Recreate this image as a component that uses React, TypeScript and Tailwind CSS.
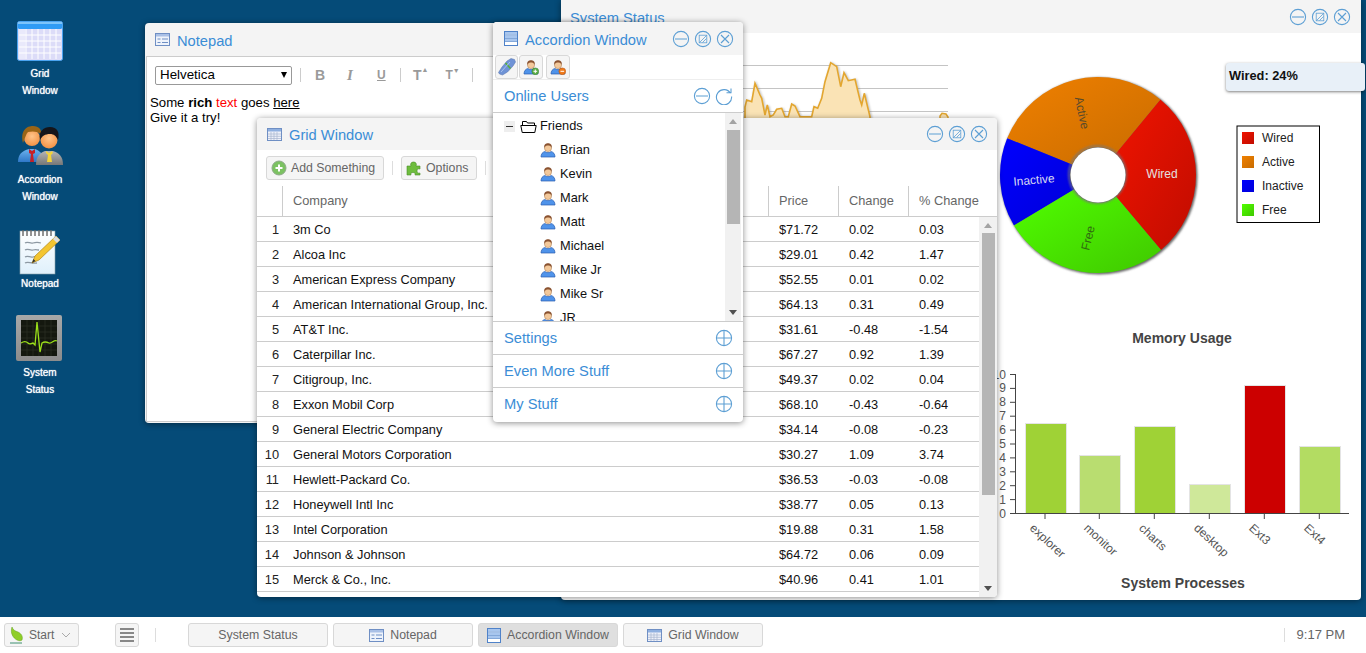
import React from "react";

const blue = "#3b8dd6";
const Ctl = ({ kind }: { kind: "min" | "max" | "close" | "plus" | "refresh" }) => (
  <svg width="18" height="18" viewBox="0 0 18 18" fill="none" stroke="#5d9fd4" strokeWidth="1.1" className="shrink-0">
    {kind === "refresh" ? (
      <path d="M15.5 6.2A7.6 7.6 0 1 0 16.6 9.5M11.5 5.8h4.5V1.6" />
    ) : (
      <circle cx="9" cy="9" r="7.6" />
    )}
    {kind === "min" && <path d="M3 9h12" />}
    {kind === "plus" && <path d="M2 9h14M9 2v14" />}
    {kind === "close" && <path d="M5 5l8 8M13 5l-8 8" />}
    {kind === "max" && (
      <g strokeWidth=".8">
        <rect x="5.2" y="5.2" width="7.6" height="7.6" />
        <path d="M5.500 12.500l7-7M8.500 12.500l4-4" />
      </g>
    )}
  </svg>
);

const FormIcon = () => (
  <svg width="15" height="13" viewBox="0 0 15 13" className="shrink-0">
    <rect x=".5" y=".5" width="14" height="12" fill="#eef3fb" stroke="#6f8fc4" />
    <rect x="1" y="1" width="13" height="2.500" fill="#a9c0e6" />
    <path d="M2.500 6h3M2.500 9.500h3M7 6h6M7 9.500h6" stroke="#6f8fc4" />
  </svg>
);
const GridIcon = () => (
  <svg width="15" height="13" viewBox="0 0 15 13" className="shrink-0">
    <rect x=".5" y=".5" width="14" height="12" fill="#eef1fa" stroke="#6f8fc4" />
    <rect x="1" y="1" width="13" height="2.500" fill="#8fb0e0" />
    <path d="M1 6h13M1 8.300h13M1 10.500h13M4 4v8M7 4v8M10 4v8" stroke="#a7b4cf" strokeWidth=".7" />
  </svg>
);
const AccIcon = () => (
  <svg width="14" height="15" viewBox="0 0 14 15" className="shrink-0">
    <rect x=".5" y=".5" width="13" height="14" fill="#fff" stroke="#4f82c9" />
    <rect x="1" y="1" width="12" height="2.500" fill="#a8c6ee" />
    <rect x="1" y="4.500" width="12" height="2.500" fill="#a8c6ee" />
    <rect x="1" y="8" width="12" height="2" fill="#a8c6ee" />
    <path d="M1 4h12M1 7.500h12M1 10.500h12" stroke="#4f82c9" strokeWidth=".7" />
  </svg>
);

const UserSmall = ({ badge }: { badge?: "add" | "del" }) => (
  <svg width="16" height="16" viewBox="0 0 16 16" className="shrink-0">
    <path d="M1 15c0-3 1.500-5 4-5.500 1 1.500 5 1.500 6 0 2.500.5 4 2.500 4 5.500z" fill="#4f93ea" stroke="#2a5db0" strokeWidth=".7" />
    <circle cx="8" cy="6" r="3.600" fill="#f3c89a" stroke="#8a5a30" strokeWidth=".4" />
    <path d="M4.300 6C3.800 2 6 1.200 8 1.200S12.200 2 11.700 6c-.6-2-2-2.500-3.700-2.500S4.900 4 4.300 6z" fill="#8a5230" />
    {badge === "add" && (
      <g>
        <circle cx="12.300" cy="12.300" r="3.400" fill="#5fb04a" stroke="#2f7a2a" strokeWidth=".5" />
        <path d="M10.500 12.300h3.600M12.300 10.500v3.600" stroke="#fff" />
      </g>
    )}
    {badge === "del" && (
      <g>
        <circle cx="12.300" cy="12.300" r="3.400" fill="#ef7a1a" stroke="#b54f0a" strokeWidth=".5" />
        <path d="M10.500 12.300h3.600" stroke="#fff" />
      </g>
    )}
  </svg>
);

const DeskGrid = () => (
  <svg width="46" height="40" viewBox="0 0 46 40">
    <rect x=".5" y=".5" width="45" height="39" rx="2" fill="#dcdcf8" stroke="#4aa3f0" />
    <rect x="1" y="1" width="44" height="7" rx="1.500" fill="#2f9bf5" />
    <rect x="1" y="1" width="44" height="2" fill="#7cc4fb" />
    <rect x="2" y="8" width="6" height="30" fill="#e9e9fb" />
    <path d="M2 14h42M2 20h42M2 26h42M2 32h42M9 8v30M15 8v30M21 8v30M27 8v30M33 8v30M39 8v30" stroke="#fff" />
  </svg>
);
const DeskUsers = () => (
  <svg width="47" height="40" viewBox="0 0 47 40">
    <defs>
      <radialGradient id="fc" cx=".5" cy=".4" r=".7"><stop offset="0" stopColor="#ffc48a" /><stop offset="1" stopColor="#f08a3a" /></radialGradient>
      <linearGradient id="bs" x1="0" y1="0" x2="0" y2="1"><stop offset="0" stopColor="#6cb2ee" /><stop offset="1" stopColor="#2f78c8" /></linearGradient>
      <linearGradient id="gs" x1="0" y1="0" x2="0" y2="1"><stop offset="0" stopColor="#b4b4b4" /><stop offset="1" stopColor="#777" /></linearGradient>
    </defs>
    <path d="M1 36c0-8 4-11 11-13h6c5 2 9 5 9 13z" fill="url(#bs)" />
    <path d="M12 23l3 2 3-2 0 4-2 1 1 8h-4l1-8-2-1z" fill="#c62026" />
    <circle cx="15" cy="12" r="8" fill="url(#fc)" />
    <path d="M6 17C3 4 10 0 16 0s9 4 8 8c-4-3-9-3-13-2-2 2-3 6-5 11z" fill="#9a6416" />
    <path d="M19 39c0-9 4-12 9-14h8c6 2 10 5 10 14z" fill="url(#gs)" />
    <path d="M29 25l3 2 3-2 1 2-2 2 1 7h-5l1-7-2-2z" fill="#f3d33a" />
    <circle cx="32" cy="14" r="8.500" fill="url(#fc)" />
    <path d="M23 14c-2-9 4-13 10-13 7 0 10 5 8 13-2-4-4-6-8-6-5 0-8 2-10 6z" fill="#15151a" />
  </svg>
);
const DeskNotepad = () => (
  <svg width="42" height="46" viewBox="0 0 42 46">
    <defs><linearGradient id="pg" x1="0" y1="0" x2="0" y2="1"><stop offset="0" stopColor="#fff" /><stop offset="1" stopColor="#dff0fb" /></linearGradient></defs>
    <rect x="1" y="2" width="35" height="43" fill="url(#pg)" stroke="#8aa0a8" strokeWidth=".6" />
    <path d="M4 1v6M8 1v6M12 1v6M16 1v6M20 1v6M24 1v6M28 1v6M32 1v6" stroke="#666" strokeWidth="1.400" />
    <path d="M6 14c3-2 5 1 8 0s5-1 8 0M6 21c3-2 5 1 8 0s4 0 6 0M6 28c3-2 5 1 8 0 2-1 2 0 4 0M6 34c3-2 6 1 12 0" fill="none" stroke="#8d99a3" strokeWidth="1.300" />
    <path d="M37 7l4 4-21 20-7 3 3-7z" fill="#f3c531" stroke="#b08518" strokeWidth=".7" />
    <path d="M37 7l4 4-3 3-4-4z" fill="#ddd" />
    <path d="M13 34l1.500-4 2 2z" fill="#333" />
  </svg>
);
const DeskStatus = () => (
  <svg width="46" height="46" viewBox="0 0 46 46" className="-ml-[2px]">
    <defs><linearGradient id="sg" x1="0" y1="0" x2="0" y2="1"><stop offset="0" stopColor="#a8a8a8" /><stop offset="1" stopColor="#8c8c8c" /></linearGradient></defs>
    <rect x="0" y="0" width="46" height="46" rx="2" fill="url(#sg)" />
    <rect x="5" y="5" width="36" height="36" fill="#14180f" />
    <path d="M5 11h36M5 17h36M5 23h36M5 29h36M5 35h36M11 5v36M17 5v36M23 5v36M29 5v36M35 5v36" stroke="#2c3226" strokeWidth=".7" />
    <path d="M5 28c3-2 5-2 7 0 2 2 4 0 5 0l2 2 2-23 3 30 2-9c3-2 5-1 7 0 3 1 5-4 8-2" fill="none" stroke="#9be01a" strokeWidth="1.300" />
  </svg>
);

const DeskItem = ({ icon, lines, cls }: { icon: React.ReactNode; lines: string[]; cls: string }) => (
  <div className="flex flex-col items-center w-[80px]">
    <div className="flex justify-center items-end">{icon}</div>
    <div className={`text-white text-[10px] leading-[17px] text-center [text-shadow:0_0_1px_#fff] ${cls}`}>
      {lines.map((l) => (
        <div key={l}>{l}</div>
      ))}
    </div>
  </div>
);

const Scrollbar = ({ thumbTop, thumbH, cls }: { thumbTop: string; thumbH: string; cls: string }) => (
  <div className={`relative flex flex-col items-center bg-[#f1f1f1] ${cls}`}>
    <div className="mt-[6px] w-0 h-0 border-x-[4px] border-x-transparent border-b-[5px] border-b-[#a3a3a3]" />
    <div className={`bg-[#b5b5b5] w-[13px] ${thumbTop} ${thumbH}`} />
    <div className="mt-auto mb-[6px] w-0 h-0 border-x-[4px] border-x-transparent border-t-[5px] border-t-[#505050]" />
  </div>
);

const rows: [string, string, string, string][] = [
  ["3m Co", "$71.72", "0.02", "0.03"],
  ["Alcoa Inc", "$29.01", "0.42", "1.47"],
  ["American Express Company", "$52.55", "0.01", "0.02"],
  ["American International Group, Inc.", "$64.13", "0.31", "0.49"],
  ["AT&T Inc.", "$31.61", "-0.48", "-1.54"],
  ["Caterpillar Inc.", "$67.27", "0.92", "1.39"],
  ["Citigroup, Inc.", "$49.37", "0.02", "0.04"],
  ["Exxon Mobil Corp", "$68.10", "-0.43", "-0.64"],
  ["General Electric Company", "$34.14", "-0.08", "-0.23"],
  ["General Motors Corporation", "$30.27", "1.09", "3.74"],
  ["Hewlett-Packard Co.", "$36.53", "-0.03", "-0.08"],
  ["Honeywell Intl Inc", "$38.77", "0.05", "0.13"],
  ["Intel Corporation", "$19.88", "0.31", "1.58"],
  ["Johnson & Johnson", "$64.72", "0.06", "0.09"],
  ["Merck & Co., Inc.", "$40.96", "0.41", "1.01"],
];

const area =
  "745,130 745,107 746.700,100 751.700,101.700 755,83.300 760,95 761.700,98.300 765,115 767.300,105 770,116.700 773.300,115 776.700,109.300 781.700,108.300 785,116.700 788.300,116.700 791.700,104 795,106 800,116.700 811.700,116.700 814,106.700 817.700,108.300 821.700,98.300 825,81.700 830.700,62.700 836.700,66.700 840.700,86.700 844,72.700 848.300,80.700 855,79.300 860,100 861.700,105 864.300,93.300 870,116.700 870,130";

const pol = (r: number, a: number) => {
  const t = (a * Math.PI) / 180;
  return `${(1098 + r * Math.cos(t)).toFixed(2)} ${(175 + r * Math.sin(t)).toFixed(2)}`;
};
const slice = (a0: number, a1: number) => {
  const large = a1 - a0 > 180 ? 1 : 0;
  return `M${pol(28, a0)} L${pol(98, a0)} A98 98 0 ${large} 1 ${pol(98, a1)} L${pol(28, a1)} A28 28 0 ${large} 0 ${pol(28, a0)}Z`;
};

const bars = [
  { x: 1026, t: 424, c: "#9fd236", l: "explorer", tx: 1045 },
  { x: 1080, t: 456, c: "#b9dd70", l: "monitor", tx: 1099.3 },
  { x: 1135, t: 427, c: "#9fd236", l: "charts", tx: 1154.3 },
  { x: 1190, t: 485, c: "#cfe89a", l: "desktop", tx: 1209.3 },
  { x: 1245, t: 386, c: "#cc0000", l: "Ext3", tx: 1264.3 },
  { x: 1300, t: 447, c: "#b3dc62", l: "Ext4", tx: 1319.3 },
];

const Charts = () => (
  <svg viewBox="561 33 800 567" className="w-full h-full block" fontFamily="'Liberation Sans', Arial, sans-serif">
    <defs>
      <linearGradient id="g1" x1="0" y1="0" x2="1" y2="1"><stop offset="0" stopColor="#f01400" /><stop offset="1" stopColor="#c00c00" /></linearGradient>
      <linearGradient id="g2" x1="0" y1="0" x2="1" y2="1"><stop offset="0" stopColor="#f08000" /><stop offset="1" stopColor="#c86c00" /></linearGradient>
      <linearGradient id="g3" x1="0" y1="0" x2="1" y2="1"><stop offset="0" stopColor="#0000ff" /><stop offset="1" stopColor="#0000d8" /></linearGradient>
      <linearGradient id="g4" x1="0" y1="0" x2="1" y2="1"><stop offset="0" stopColor="#50ff00" /><stop offset="1" stopColor="#40c800" /></linearGradient>
      <filter id="bl" x="-20%" y="-20%" width="140%" height="140%"><feGaussianBlur stdDeviation="1" /></filter>
    </defs>

    {[65.5, 88.5, 111.5].map((y) => (
      <line key={y} x1="600" x2="948" y1={y} y2={y} stroke="#c4c4c4" />
    ))}
    <polygon points="940,125 940,116 942,113.300 946,114 948,117 948,125" fill="#fae3b5" stroke="#e3a62f" strokeWidth="1.500" />
    <polygon points={area} fill="none" stroke="#666" strokeWidth="2" opacity=".45" filter="url(#bl)" transform="translate(1 1)" />
    <polygon points={area} fill="#fae3b5" stroke="#e3a62f" strokeWidth="1.600" />

    <circle cx="1099" cy="176" r="98.500" fill="#666" filter="url(#bl)" />
    <path d={slice(-50.500, 50)} fill="url(#g1)" />
    <path d={slice(-158, -50.500)} fill="url(#g2)" />
    <path d={slice(149, 202)} fill="url(#g3)" />
    <path d={slice(50, 149)} fill="url(#g4)" />
    <circle cx="1097.500" cy="174.500" r="28.500" fill="none" stroke="#777" strokeWidth="1.500" filter="url(#bl)" />
    <circle cx="1098" cy="175" r="27.500" fill="#fff" />
    <g fontSize="12" textAnchor="middle">
      <text x="1162" y="178" fill="#e4e0e0">Wired</text>
      <text x="1034" y="184" fill="#d8d8f0" transform="rotate(-5 1034 180)">Inactive</text>
      <text x="1082" y="117" fill="#5a4a2a" transform="rotate(78 1082 113)">Active</text>
      <text x="1088" y="242" fill="#2f6a10" transform="rotate(-76 1088 238)">Free</text>
    </g>

    <rect x="1237" y="126" width="82.500" height="96.500" fill="#fff" stroke="#000" />
    {[
      ["Wired", "url(#g1)"],
      ["Active", "url(#g2)"],
      ["Inactive", "url(#g3)"],
      ["Free", "url(#g4)"],
    ].map(([n, c], i) => (
      <g key={n}>
        <rect x="1242" y={132 + i * 24} width="12" height="12" fill={c} />
        <text x="1262" y={142 + i * 24} fontSize="12" fill="#222">{n}</text>
      </g>
    ))}

    <text x="1182" y="343" fontSize="14" fontWeight="700" textAnchor="middle" fill="#444">Memory Usage</text>
    {Array.from({ length: 11 }, (_, i) => 513.500 - i * 13.900).map((y, i) => (
      <g key={i}>
        <line x1="1010" x2="1015" y1={y} y2={y} stroke="#444" />
        <text x="1006" y={y + 4} fontSize="12" textAnchor="end" fill="#555">{i}</text>
      </g>
    ))}
    {bars.map((b) => (
      <g key={b.l}>
        <rect x={b.x - 1} y={b.t - 1} width="42" height={514 - b.t + 1} fill="#e4e4e4" />
        <rect x={b.x} y={b.t} width="40" height={513 - b.t} fill={b.c} />
        <line x1={b.tx} x2={b.tx} y1="513.500" y2="519" stroke="#444" />
        <text x={b.tx - 16} y="529" fontSize="12" fill="#555" transform={`rotate(43 ${b.tx - 16} 529)`}>{b.l}</text>
      </g>
    ))}
    <line x1="1015.500" x2="1015.500" y1="374" y2="513.500" stroke="#444" />
    <line x1="1015" x2="1349" y1="513.500" y2="513.500" stroke="#444" />
    <text x="1183" y="588" fontSize="14" fontWeight="700" textAnchor="middle" fill="#444">System Processes</text>
  </svg>
);

const TaskBtn = ({ icon, label, active }: { icon?: React.ReactNode; label: string; active?: boolean }) => (
  <div className={`w-[140px] h-[24px] flex items-center justify-center gap-[6px] border border-[#d8d8d8] rounded-[3px] text-[12.3px] text-[#666] ${active ? "bg-[#dfdfdf]" : "bg-[#f5f5f5]"}`}>
    {icon}
    <span>{label}</span>
  </div>
);

const shadow = "shadow-[0_1px_6px_rgba(0,0,0,0.45)]";
const title = "text-[14.7px] flex-1 pt-[4px]";

export default function App() {
  return (
    <div className="w-[1366px] h-[653px] overflow-hidden flex flex-col font-['Liberation_Sans',Arial,sans-serif] text-[12.8px] text-black">
      <div className="relative flex-1 bg-[#054b78]">
        {/* desktop icons */}
        <div className="absolute left-0 top-[21px]"><DeskItem cls="mt-[4px]" icon={<DeskGrid />} lines={["Grid", "Window"]} /></div>
        <div className="absolute left-0 top-[126px]"><DeskItem cls="mt-[5px]" icon={<DeskUsers />} lines={["Accordion", "Window"]} /></div>
        <div className="absolute left-0 top-[229px]"><DeskItem cls="mt-0" icon={<DeskNotepad />} lines={["Notepad"]} /></div>
        <div className="absolute left-0 top-[315px]"><DeskItem cls="mt-[3px]" icon={<DeskStatus />} lines={["System", "Status"]} /></div>

        {/* System Status */}
        <div className={`absolute left-[561px] top-0 w-[800px] h-[600px] bg-white rounded-b-[4px] flex flex-col ${shadow}`}>
          <div className="h-[33px] shrink-0 bg-[#f4f4f4] flex items-center pl-[9px] pr-[10px] gap-[4px]">
            <span className={title} style={{ color: blue }}>System Status</span>
            <Ctl kind="min" /><Ctl kind="max" /><Ctl kind="close" />
          </div>
          <div className="flex-1 min-h-0"><Charts /></div>
        </div>

        {/* Notepad */}
        <div className={`absolute left-[145px] top-[23px] w-[500px] h-[400px] bg-[#f4f4f4] rounded-[4px] flex flex-col ${shadow}`}>
          <div className="h-[33px] shrink-0 flex items-center pl-[10px] gap-[7px]">
            <FormIcon />
            <span className={title} style={{ color: blue }}>Notepad</span>
          </div>
          <div className="flex-1 mx-[1px] mb-[1px] bg-white border border-[#ccc] flex flex-col">
            <div className="flex items-center h-[36px] pl-[8px] shrink-0">
              <div className="w-[137px] h-[19px] border border-[#999] rounded-[2px] flex items-center justify-between pl-[4px] pr-[4px] text-[13.33px]">
                <span>Helvetica</span>
                <span className="w-0 h-0 border-x-[3.500px] border-x-transparent border-t-[6px] border-t-black" />
              </div>
              <div className="w-px h-[14px] bg-[#ccc] ml-[8px]" />
              <span className="ml-[14px] font-bold text-[14px] text-[#9a9a9a] w-[10px]">B</span>
              <span className="ml-[22px] italic font-bold font-['Liberation_Serif',serif] text-[15px] text-[#9a9a9a] w-[10px]">I</span>
              <span className="ml-[20px] underline font-bold text-[12px] text-[#9a9a9a] w-[14px]">U</span>
              <div className="w-px h-[14px] bg-[#ccc] ml-[9px]" />
              <span className="ml-[12px] font-bold text-[14px] text-[#9a9a9a]">T<span className="text-[7px] align-top">▲</span></span>
              <span className="ml-[17px] font-bold text-[12px] text-[#9a9a9a]">T<span className="text-[7px] align-top">▼</span></span>
              <div className="w-px h-[14px] bg-[#ccc] ml-[12px]" />
            </div>
            <div className="pl-[3px] pt-[3px] text-[13.2px] leading-[14.500px]">
              <div>Some <b>rich</b> <span className="text-[#f00]">text</span> goes <u>here</u></div>
              <div>Give it a try!</div>
            </div>
          </div>
        </div>

        {/* Grid Window */}
        <div className={`absolute left-[257px] top-[118px] w-[740px] h-[479px] bg-white rounded-[4px] flex flex-col overflow-hidden ${shadow}`}>
          <div className="h-[32px] shrink-0 bg-[#f4f4f4] flex items-center pl-[10px] pr-[9px] gap-[7px]">
            <GridIcon />
            <span className="text-[14.7px] flex-1 pt-[2px]" style={{ color: blue }}>Grid Window</span>
            <div className="flex gap-[4px]"><Ctl kind="min" /><Ctl kind="max" /><Ctl kind="close" /></div>
          </div>
          <div className="h-[36px] shrink-0 flex items-center pl-[9px] text-[#666] text-[12.3px]">
            <div className="h-[24px] w-[118px] border border-[#d8d8d8] bg-[#f5f5f5] rounded-[3px] flex items-center pl-[4px] gap-[4px]">
              <svg width="16" height="16" viewBox="0 0 16 16"><circle cx="8" cy="8" r="7" fill="#7cc262" stroke="#8fa88a" /><path d="M4.500 8h7M8 4.500v7" stroke="#fff" strokeWidth="2" /></svg>
              <span>Add Something</span>
            </div>
            <div className="w-px h-[14px] bg-[#ddd] ml-[8px]" />
            <div className="h-[24px] w-[76px] border border-[#d8d8d8] bg-[#f5f5f5] rounded-[3px] flex items-center pl-[4px] gap-[4px] ml-[8px]">
              <svg width="16" height="16" viewBox="0 0 16 16"><path d="M1 6h4c-1-2 0-4 2.500-4S11 4 10 6h4v3c-2-.5-3 0-3 2s1.500 2.500 3 2v2H9c.5-1.500 0-2.500-2-2.500s-2.500 1-2 2.500H1z" fill="#6ebd3e" stroke="#4c8f2a" strokeWidth=".6" /></svg>
              <span>Options</span>
            </div>
            <div className="w-px h-[14px] bg-[#ddd] ml-[8px]" />
          </div>
          <div className="h-[31px] shrink-0 border-b border-[#ccc] grid grid-cols-[26px_486px_70px_70px_88px] text-[#666] items-stretch">
            <div className="border-r border-[#ccc]" />
            {["Company", "Price", "Change", "% Change"].map((h, i) => (
              <div key={h} className={`flex items-center pl-[10px] ${i < 3 ? "border-r border-[#ccc]" : ""}`}>{h}</div>
            ))}
          </div>
          <div className="flex-1 min-h-0 flex">
            <div className="w-[722px] overflow-hidden">
              {rows.map((r, i) => (
                <div key={r[0]} className="h-[25px] pt-[1px] border-b border-[#ccc] grid grid-cols-[25px_486px_70px_70px_71px] items-center text-[#111]">
                  <div className="text-right pr-[3px] text-[#222]">{i + 1}</div>
                  <div className="pl-[11px]">{r[0]}</div>
                  <div className="pl-[11px]">{r[1]}</div>
                  <div className="pl-[11px]">{r[2]}</div>
                  <div className="pl-[11px]">{r[3]}</div>
                </div>
              ))}
            </div>
            <Scrollbar cls="w-[18px]" thumbTop="mt-[5px]" thumbH="h-[262px]" />
          </div>
        </div>

        {/* Accordion */}
        <div className={`absolute left-[493px] top-[22px] w-[250px] h-[400px] bg-white rounded-[4px] flex flex-col overflow-hidden ${shadow}`}>
          <div className="h-[33px] shrink-0 bg-[#f4f4f4] flex items-center pl-[11px] pr-[9px] gap-[7px]">
            <AccIcon />
            <span className={title} style={{ color: blue }}>Accordion Window</span>
            <div className="flex gap-[4px]"><Ctl kind="min" /><Ctl kind="max" /><Ctl kind="close" /></div>
          </div>
          <div className="h-[25px] shrink-0 flex items-center pl-[2px] gap-[1px] border-b border-[#eee]">
            <div className="w-[23px] h-[24px] border border-[#d8d8d8] bg-[#f5f5f5] rounded-[3px] flex items-center justify-center">
              <svg width="20" height="20" viewBox="0 0 20 20"><path d="M1.500 15.500L5 10l5-6 4-2.500 3.500 1 1 2.500-2.500 4-5.500 6-5 3-3-1z" fill="#6f93d6" stroke="#5470a8" strokeWidth=".5" /><path d="M8.500 6l5 5.500" stroke="#58b038" strokeWidth="1.500" /><path d="M4 15L13 5" stroke="#a8c2ee" /></svg>
            </div>
            <div className="w-[24px] h-[24px] border border-[#d8d8d8] bg-[#f5f5f5] rounded-[3px] flex items-center justify-center"><UserSmall badge="add" /></div>
            <div className="w-[24px] h-[24px] border border-[#d8d8d8] bg-[#f5f5f5] rounded-[3px] flex items-center justify-center ml-[2px]"><UserSmall badge="del" /></div>
          </div>
          <div className="h-[33px] shrink-0 border-b border-[#ccc] flex items-center pl-[11px] pr-[10px] gap-[4px]">
            <span className="text-[14.7px] flex-1 pt-[1px]" style={{ color: blue }}>Online Users</span>
            <Ctl kind="min" /><Ctl kind="refresh" />
          </div>
          <div className="h-[208px] shrink-0 flex overflow-hidden">
            <div className="w-[232px] pt-[1px] overflow-hidden text-[#111]">
              <div className="h-[24px] flex items-center pl-[11px]">
                <span className="w-[11px] h-[11px] bg-[#eee] flex items-center justify-center"><span className="w-[7px] h-px bg-[#333]" /></span>
                <svg width="17" height="13" viewBox="0 0 17 13" className="ml-[5px]" fill="none" stroke="#000"><path d="M2.500 5V1.500h4l1 1.500h7V5" /><path d="M.8 5.500h15.400l-1.400 7H2.200z" /></svg>
                <span className="ml-[3px]">Friends</span>
              </div>
              {["Brian", "Kevin", "Mark", "Matt", "Michael", "Mike Jr", "Mike Sr", "JR"].map((n) => (
                <div key={n} className="h-[24px] flex items-center pl-[47px] gap-[4px]">
                  <UserSmall />
                  <span>{n}</span>
                </div>
              ))}
            </div>
            <Scrollbar cls="w-[16px]" thumbTop="mt-[6px]" thumbH="h-[94px]" />
          </div>
          {["Settings", "Even More Stuff", "My Stuff"].map((t) => (
            <div key={t} className="h-[33px] shrink-0 border-t border-[#ccc] flex items-center pl-[11px] pr-[10px]">
              <span className="text-[14.7px] flex-1 pt-[1px]" style={{ color: blue }}>{t}</span>
              <Ctl kind="plus" />
            </div>
          ))}
        </div>

        {/* Tooltip */}
        <div className="absolute left-[1226px] top-[63px] w-[139px] h-[28px] bg-[#e8f0f8] rounded-[3px] shadow-[0_1px_3px_rgba(0,0,0,0.5)] pl-[3px] pt-[3px] font-bold text-[12.8px] text-[#111]">
          Wired: 24%
        </div>
      </div>

      {/* Taskbar */}
      <div className="h-[36px] shrink-0 bg-white flex items-center pl-[4px] pr-[21px] text-[#666] text-[12px]">
        <div className="w-[75px] h-[24px] border border-[#d8d8d8] bg-[#f5f5f5] rounded-[3px] flex items-center pl-[4px] gap-[5px]">
          <svg width="15" height="18" viewBox="0 0 15 18"><path d="M3 1c1 3 3 4 6 5 4 2 5 5 4 8-1 1-3 1-5 0C4 12 1 7 3 1z" fill="#8fce28" stroke="#5f9e18" strokeWidth=".5" /><path d="M1 17h12" stroke="#3f8f70" /></svg>
          <span>Start</span>
          <svg width="10" height="7" viewBox="0 0 10 7" fill="none" stroke="#aaa" className="ml-[2px]"><path d="M1 1l4 4 4-4" /></svg>
        </div>
        <div className="ml-[36px] w-[24px] h-[24px] border border-[#d8d8d8] bg-[#f5f5f5] rounded-[3px] flex flex-col items-center justify-center gap-[2px]">
          <span className="w-[14px] h-[2px] bg-[#888]" /><span className="w-[14px] h-[2px] bg-[#888]" /><span className="w-[14px] h-[2px] bg-[#888]" /><span className="w-[14px] h-[2px] bg-[#888]" />
        </div>
        <div className="ml-[16px] w-px h-[14px] bg-[#ddd]" />
        <div className="ml-[32px] flex gap-[5px]">
          <TaskBtn label="System Status" />
          <TaskBtn label="Notepad" icon={<FormIcon />} />
          <TaskBtn label="Accordion Window" icon={<AccIcon />} active />
          <TaskBtn label="Grid Window" icon={<GridIcon />} />
        </div>
        <div className="ml-auto flex items-center">
          <div className="w-px h-[14px] bg-[#ddd] mr-[12px]" />
          <span className="text-[13px]">9:17 PM</span>
        </div>
      </div>
    </div>
  );
}
